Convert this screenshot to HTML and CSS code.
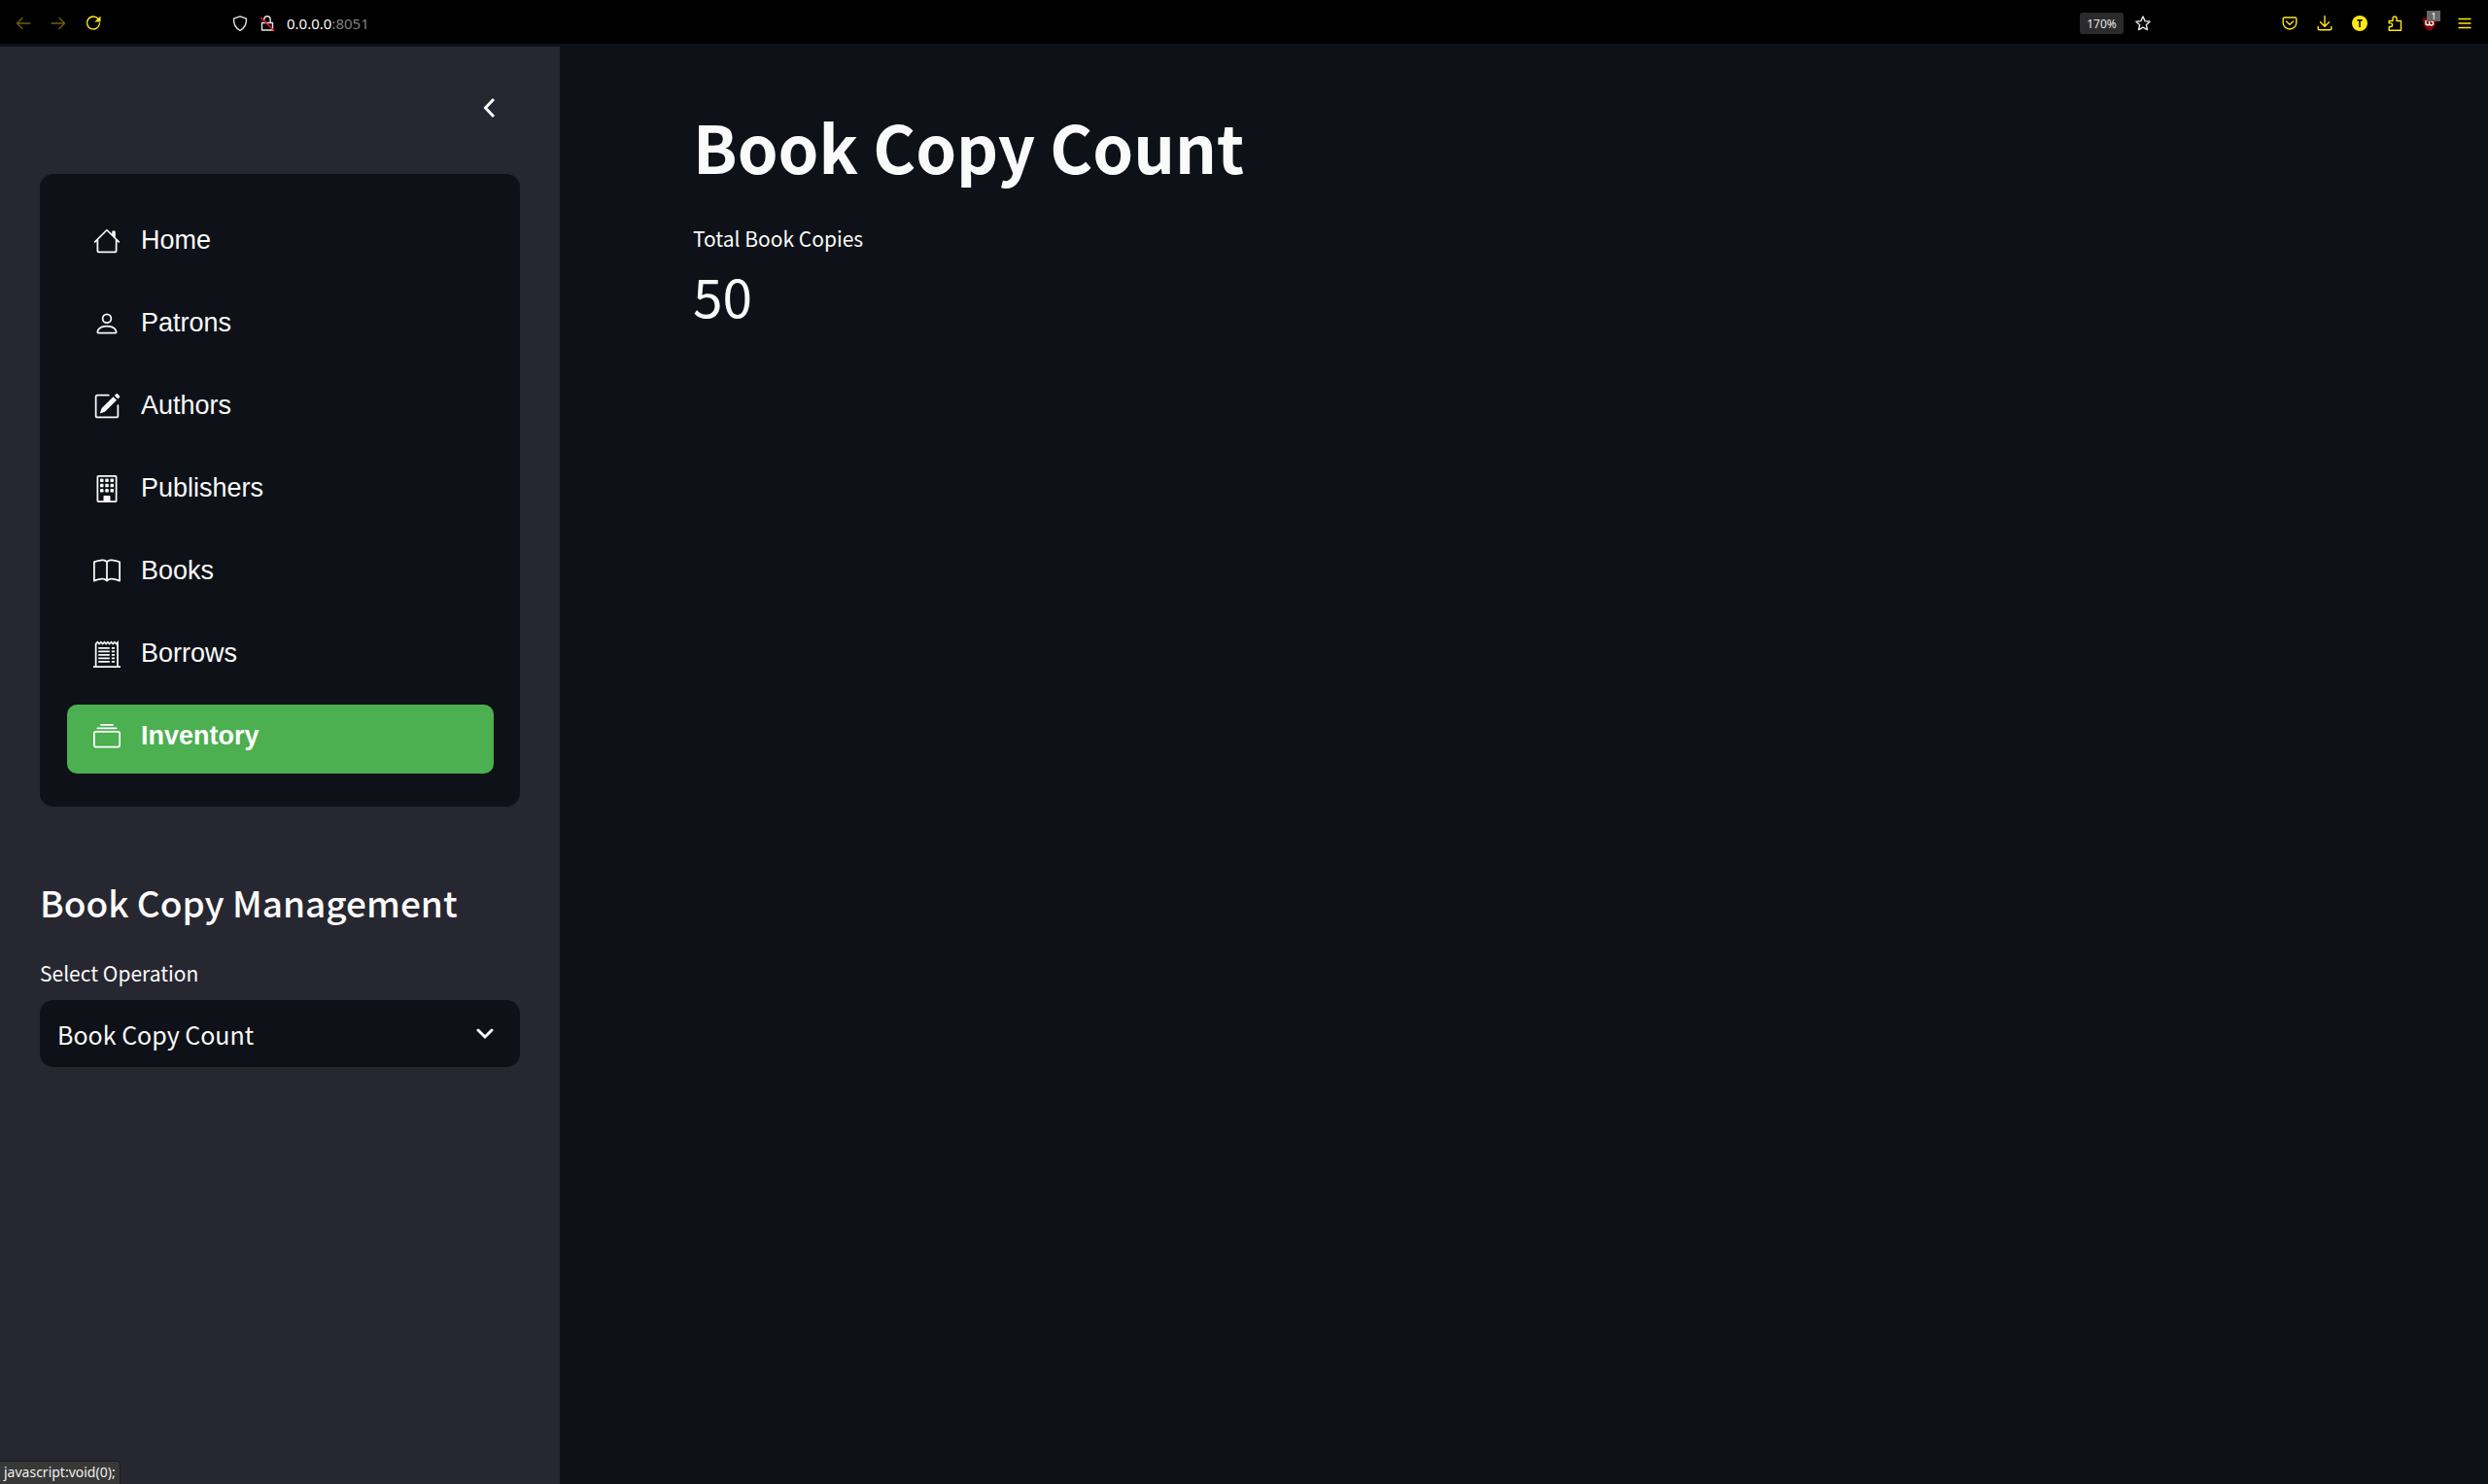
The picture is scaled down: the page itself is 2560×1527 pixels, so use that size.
FILE: index.html
```html
<!DOCTYPE html>
<html lang="en">
<head>
<meta charset="utf-8">
<meta name="viewport" content="width=device-width, initial-scale=1">
<title>Book Copy Count</title>
<link rel="stylesheet" href="styles.css">
</head>
<body>
<header class="toolbar">
  <div class="group nav-buttons">
    <button class="tool dim" aria-label="Back"><svg viewBox="0 0 16 16"><path d="M15 8H1.500M7 2.500L1.500 8L7 13.500"/></svg></button>
    <button class="tool dim" aria-label="Forward"><svg viewBox="0 0 16 16"><path d="M1 8h13.500M9 2.500L14.500 8L9 13.500"/></svg></button>
    <button class="tool" aria-label="Reload"><svg viewBox="0 0 16 16"><path d="M13 3.300A6.500 6.500 0 1 0 14.500 8"/><path class="solid" d="M15.500 .5v6H9.500z"/></svg></button>
  </div>
  <div class="group address">
    <button class="tool light" aria-label="Tracking protection"><svg viewBox="0 0 16 16"><path d="M8 .8L14.500 3.200C14.700 9 12.500 13 8 15.300C3.500 13 1.300 9 1.500 3.200z"/></svg></button>
    <button class="tool light" aria-label="Connection not secure"><svg viewBox="0 0 16 16"><path d="M2.500 7.500h11v7.500h-11zM4.800 4.200a3.200 3.400 0 0 1 6.400 0v3.300"/><path class="strike" d="M1.500 2.500l13.500 13"/></svg></button>
    <span class="url">0.0.0.0<span class="port">:8051</span></span>
  </div>
  <div class="group page-actions">
    <button class="zoom">170%</button>
    <button class="tool light" aria-label="Bookmark this page"><svg viewBox="0 0 16 16"><path d="M8 1l2.100 4.600 5 .6-3.700 3.400 1 5L8 12.100l-4.400 2.500 1-5L.9 6.200l5-.6z"/></svg></button>
  </div>
  <div class="group extensions">
    <button class="tool" aria-label="Save to Pocket"><svg viewBox="0 0 16 16"><path d="M2.500 2h11a1.300 1.300 0 0 1 1.300 1.300V7.500a6.800 6.500 0 0 1-13.600 0V3.300A1.300 1.300 0 0 1 2.500 2zM4.500 6L8 9.300L11.500 6"/></svg></button>
    <button class="tool" aria-label="Downloads"><svg viewBox="0 0 16 16"><path d="M8 .5v10.500M3.500 6.800L8 11.200l4.500-4.400M1.200 11.500v2a1.300 1.300 0 0 0 1.300 1.300h11a1.300 1.300 0 0 0 1.300-1.300v-2"/></svg></button>
    <button class="avatar">T</button>
    <button class="tool" aria-label="Extensions"><svg viewBox="0 0 16 16"><path d="M2.200 15.200V11.500h1.600a1.800 1.800 0 0 0 0-3.600H2.200V5.500H6V3a2 2 0 0 1 4 0v2.500h4.500v9.700z"/></svg></button>
    <button class="tool blocker" aria-label="Content blocker, 1 blocked"><svg viewBox="0 0 16 16"><path class="crest" d="M8 .3C10 1.600 12.500 2.300 15 2.400C15 9 13.500 13 8 15.800C2.500 13 1 9 1 2.400C3.500 2.300 6 1.600 8 .3z"/><path class="mark" d="M4 5.500v2.500a1.800 1.800 0 0 0 3.600 0V5.500M7.600 8a2 2 0 1 0 2-2"/></svg><span class="count">1</span></button>
    <button class="tool" aria-label="Menu"><svg viewBox="0 0 16 16"><path d="M2 3.500h12M2 8h12M2 12.500h12"/></svg></button>
  </div>
</header>

<div class="app">
  <aside class="sidebar">
    <div class="collapse-row">
      <button class="collapse" aria-label="Collapse sidebar"><svg viewBox="0 0 14 22"><path d="M12 2L3.500 11l8.500 9"/></svg></button>
    </div>
    <nav class="menu">
      <a class="item" href="#home"><svg viewBox="0 0 16 16"><path d="M8.707 1.5a1 1 0 0 0-1.414 0L.646 8.146a.5.5 0 0 0 .708.708L2 8.207V13.5A1.5 1.5 0 0 0 3.5 15h9a1.5 1.5 0 0 0 1.5-1.5V8.207l.646.647a.5.5 0 0 0 .708-.708L13 5.793V2.5a.5.5 0 0 0-.5-.5h-1a.5.5 0 0 0-.5.5v1.293zM13 7.207V13.5a.5.5 0 0 1-.5.5h-9a.5.5 0 0 1-.5-.5V7.207l5-5z"/></svg>Home</a>
      <a class="item" href="#patrons"><svg viewBox="0 0 16 16"><path d="M8 8a3 3 0 1 0 0-6 3 3 0 0 0 0 6m2-3a2 2 0 1 1-4 0 2 2 0 0 1 4 0m4 8c0 1-1 1-1 1H3s-1 0-1-1 1-4 6-4 6 3 6 4m-1-.004c-.001-.246-.154-.986-.832-1.664C11.516 10.68 10.289 10 8 10s-3.516.68-4.168 1.332c-.678.678-.83 1.418-.832 1.664z"/></svg>Patrons</a>
      <a class="item" href="#authors"><svg viewBox="0 0 16 16"><path d="M15.502 1.94a.5.5 0 0 1 0 .706L14.459 3.69l-2-2L13.502.646a.5.5 0 0 1 .707 0l1.293 1.293zm-1.75 2.456-2-2L4.939 9.21a.5.5 0 0 0-.121.196l-.805 2.414a.25.25 0 0 0 .316.316l2.414-.805a.5.5 0 0 0 .196-.12l6.813-6.814z"/><path fill-rule="evenodd" d="M1 13.5A1.5 1.5 0 0 0 2.5 15h11a1.5 1.5 0 0 0 1.5-1.5v-6a.5.5 0 0 0-1 0v6a.5.5 0 0 1-.5.5h-11a.5.5 0 0 1-.5-.5v-11a.5.5 0 0 1 .5-.5H9a.5.5 0 0 0 0-1H2.500A1.5 1.5 0 0 0 1 2.500z"/></svg>Authors</a>
      <a class="item" href="#publishers"><svg viewBox="0 0 16 16"><path fill-rule="evenodd" d="M2 1a1 1 0 0 1 1-1h10a1 1 0 0 1 1 1v14a1 1 0 0 1-1 1H3a1 1 0 0 1-1-1zm11 0H3v14h3v-2.500a.5.5 0 0 1 .5-.5h3a.5.5 0 0 1 .5.5V15h3z"/><path d="M4 2.500a.5.5 0 0 1 .5-.5h1a.5.5 0 0 1 .5.5v1a.5.5 0 0 1-.5.5h-1a.5.5 0 0 1-.5-.5zm3 0a.5.5 0 0 1 .5-.5h1a.5.5 0 0 1 .5.5v1a.5.5 0 0 1-.5.5h-1a.5.5 0 0 1-.5-.5zm3 0a.5.5 0 0 1 .5-.5h1a.5.5 0 0 1 .5.5v1a.5.5 0 0 1-.5.5h-1a.5.5 0 0 1-.5-.5zM4 5.500a.5.5 0 0 1 .5-.5h1a.5.5 0 0 1 .5.5v1a.5.5 0 0 1-.5.5h-1a.5.5 0 0 1-.5-.5zm3 0a.5.5 0 0 1 .5-.5h1a.5.5 0 0 1 .5.5v1a.5.5 0 0 1-.5.5h-1a.5.5 0 0 1-.5-.5zm3 0a.5.5 0 0 1 .5-.5h1a.5.5 0 0 1 .5.5v1a.5.5 0 0 1-.5.5h-1a.5.5 0 0 1-.5-.5zM4 8.500a.5.5 0 0 1 .5-.5h1a.5.5 0 0 1 .5.5v1a.5.5 0 0 1-.5.5h-1a.5.5 0 0 1-.5-.5zm3 0a.5.5 0 0 1 .5-.5h1a.5.5 0 0 1 .5.5v1a.5.5 0 0 1-.5.5h-1a.5.5 0 0 1-.5-.5zm3 0a.5.5 0 0 1 .5-.5h1a.5.5 0 0 1 .5.5v1a.5.5 0 0 1-.5.5h-1a.5.5 0 0 1-.5-.5z"/></svg>Publishers</a>
      <a class="item" href="#books"><svg viewBox="0 0 16 16"><path fill-rule="evenodd" d="M1 2.828c.885-.37 2.154-.769 3.388-.893 1.33-.134 2.458.063 3.112.752v9.746c-.935-.53-2.12-.603-3.213-.493-1.18.12-2.37.461-3.287.811zm7.5-.141c.654-.689 1.782-.886 3.112-.752 1.234.124 2.503.523 3.388.893v9.923c-.918-.35-2.107-.692-3.287-.81-1.094-.111-2.278-.039-3.213.492zM8 1.783C7.015.936 5.587.81 4.287.94c-1.514.153-3.042.672-3.994 1.105A.5.5 0 0 0 0 2.5v11a.5.5 0 0 0 .707.455c.882-.4 2.303-.881 3.68-1.02 1.409-.142 2.59.087 3.223.877a.5.5 0 0 0 .78 0c.633-.79 1.814-1.019 3.222-.877 1.378.139 2.8.62 3.681 1.02A.5.5 0 0 0 16 13.5v-11a.5.5 0 0 0-.293-.455c-.952-.433-2.480-.952-3.994-1.105C10.413.809 8.985.936 8 1.783"/></svg>Books</a>
      <a class="item" href="#borrows"><svg viewBox="0 0 16 16"><path class="line" d="M0 15.500h16M1.500 15.500V2l1-1 1 1 1-1 1 1 1-1 1 1 1-1 1 1 1-1 1 1 1-1 1 1 .8-.8V15.500M3 4.500h6.600M3 6.500h6.600M3 8.500h6.600M3 10.500h6.600M3 12.500h6.600M10.800 4.500h1.800M10.800 6.500h1.800M10.800 8.500h1.800M10.800 10.500h1.800M10.800 12.500h1.800"/></svg>Borrows</a>
      <a class="item active" href="#inventory" aria-current="page"><svg viewBox="0 0 16 16"><path fill-rule="evenodd" d="M2.5 3.500a.5.5 0 0 1 0-1h11a.5.5 0 0 1 0 1zm2-2a.5.5 0 0 1 0-1h7a.5.5 0 0 1 0 1zM0 13a1.5 1.5 0 0 0 1.5 1.5h13A1.5 1.5 0 0 0 16 13V6a1.5 1.5 0 0 0-1.5-1.5h-13A1.5 1.5 0 0 0 0 6zm1.5.5A.5.5 0 0 1 1 13V6a.5.5 0 0 1 .5-.5h13a.5.5 0 0 1 .5.5v7a.5.5 0 0 1-.5.5z"/></svg>Inventory</a>
    </nav>
    <h2 class="section-title">Book Copy Management</h2>
    <label class="label" for="operation">Select Operation</label>
    <div class="select-box">
      <select id="operation" class="select"><option>Book Copy Count</option></select>
      <svg class="caret" viewBox="0 0 18 12"><path d="M2 2l7 7L16 2"/></svg>
    </div>
  </aside>
  <main class="content">
    <h1 class="title">Book Copy Count</h1>
    <p class="label">Total Book Copies</p>
    <p class="value">50</p>
  </main>
</div>
<div class="status">javascript:void(0);</div>
</body>
</html>
```
FILE: styles.css
```css
* { box-sizing: border-box; }

body {
  margin: 0;
  min-height: 100vh;
  display: flex;
  flex-direction: column;
  background: #0e1117;
  color: #fafafa;
  font-family: "Noto Sans CJK JP", "Noto Sans", sans-serif;
}

button {
  padding: 0;
  border: 0;
  background: none;
  color: inherit;
  font: inherit;
}

h1, h2, p { margin: 0; }

/* Browser toolbar */
.toolbar {
  height: 45px;
  padding: 3px 16px 0;
  display: flex;
  align-items: center;
  background: #000;
  font-family: "Noto Sans", sans-serif;
}
.group { display: flex; align-items: center; }
.nav-buttons { gap: 20px; }
.address { margin-left: 135px; gap: 12px; }
.page-actions { margin-left: auto; gap: 12px; }
.extensions { margin-left: 135px; gap: 20px; }
.tool {
  position: relative;
  width: 16px;
  height: 16px;
  display: block;
  color: #ffe81a;
}
.tool svg {
  width: 16px;
  height: 16px;
  display: block;
  overflow: visible;
  fill: none;
  stroke: currentColor;
  stroke-width: 1.4;
  stroke-linejoin: round;
  stroke-linecap: round;
}
.tool.dim { color: #6b6108; }
.tool.light { color: #e6e6e6; }
.tool .solid { fill: currentColor; stroke: none; }
.tool .strike { stroke: #e8143c; }
.tool .crest { fill: #800000; stroke: none; }
.tool .mark { stroke: #fff; }
.url { font-size: 15px; line-height: 20px; }
.port { color: #808080; }
.zoom {
  width: 45px;
  height: 22px;
  border-radius: 3px;
  background: #2b2b2b;
  color: #e6e6e6;
  font-size: 12px;
}
.avatar {
  width: 16px;
  height: 16px;
  border-radius: 50%;
  background: #ffe81a;
  color: #000;
  font-size: 10px;
  line-height: 16px;
  font-weight: 700;
}
.count {
  position: absolute;
  left: 5px;
  top: -5px;
  width: 14px;
  height: 11px;
  background: #666;
  color: #fff;
  font-size: 9px;
  line-height: 11px;
  text-align: center;
}

/* App */
.app { flex: 1; display: flex; }

.sidebar {
  flex: 0 0 auto;
  width: 22.5%;
  min-width: 420px;
  margin-top: 3px;
  padding: 0 41px 40px;
  background: #262730;
}
.collapse-row {
  height: 131px;
  padding: 52px 25px 0 0;
  display: flex;
  align-items: flex-start;
  justify-content: flex-end;
}
.collapse svg {
  width: 14px;
  height: 22px;
  display: block;
  fill: none;
  stroke: #fafafa;
  stroke-width: 3;
}

.menu {
  padding: 36px 27px 34px 28px;
  display: flex;
  flex-direction: column;
  gap: 14px;
  border-radius: 14px;
  background: #0e1117;
}
.item {
  height: 71px;
  padding: 0 27px 6px;
  display: flex;
  align-items: center;
  gap: 21px;
  border-radius: 10px;
  color: #fafafa;
  font-family: "Liberation Sans", sans-serif;
  font-size: 27px;
  text-decoration: none;
}
.item svg { width: 28px; height: 28px; fill: currentColor; }
.item .line { fill: none; stroke: currentColor; }
.item.active { background: #4caf50; color: #fff; font-weight: 700; }

.section-title {
  margin: 72px 0 29px;
  font-size: 37px;
  line-height: 52px;
  font-weight: 500;
}
.label {
  display: block;
  font-size: 21px;
  line-height: 36px;
}
.select-box { position: relative; margin-top: 10px; }
.select {
  width: 100%;
  height: 69px;
  padding: 0 60px 0 18px;
  appearance: none;
  border: 0;
  border-radius: 14px;
  background: #0e1117;
  color: #fafafa;
  font-family: inherit;
  font-size: 25px;
}
.caret {
  position: absolute;
  right: 27px;
  top: 29px;
  width: 18px;
  height: 12px;
  fill: none;
  stroke: #fafafa;
  stroke-width: 3;
  stroke-linecap: round;
  pointer-events: none;
}

.content { flex: 1; padding: 60px 137px; }
.title { font-size: 67px; line-height: 90px; font-weight: 700; }
.content .label { margin-top: 32px; }
.value { font-size: 55px; line-height: 80px; }

/* Link preview at the window's lower edge */
.status {
  position: fixed;
  left: 0;
  bottom: 0;
  height: 24px;
  padding: 0 4px;
  border-top: 1px solid #1c1c1c;
  border-right: 1px solid #1c1c1c;
  border-top-right-radius: 4px;
  background: #383838;
  color: #f0f0f0;
  font-family: "Noto Sans", sans-serif;
  font-size: 14px;
  line-height: 22px;
}
```
